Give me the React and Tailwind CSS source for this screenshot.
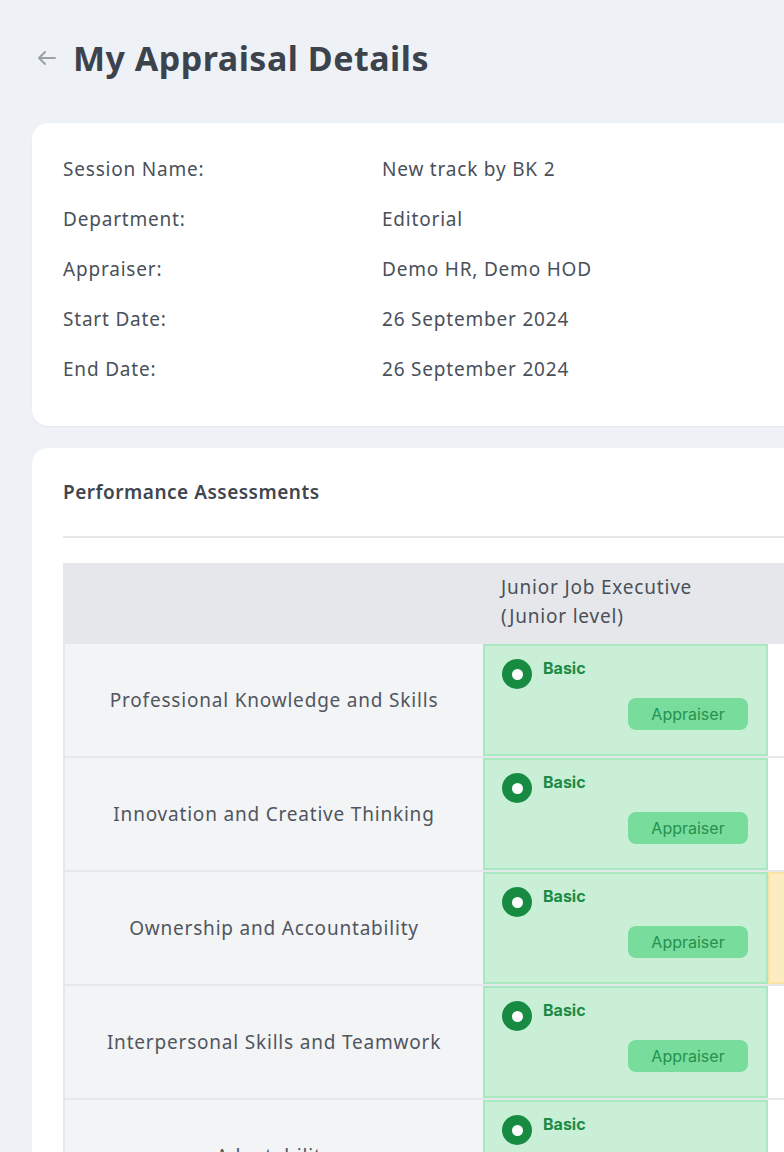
import React from 'react';

const info = [
  ['Session Name:', 'New track by BK 2'],
  ['Department:', 'Editorial'],
  ['Appraiser:', 'Demo HR, Demo HOD'],
  ['Start Date:', '26 September 2024'],
  ['End Date:', '26 September 2024'],
];

const rows = [
  { name: 'Professional Knowledge and Skills', next: 'none' },
  { name: 'Innovation and Creative Thinking', next: 'none' },
  { name: 'Ownership and Accountability', next: 'yellow' },
  { name: 'Interpersonal Skills and Teamwork', next: 'none' },
  { name: 'Adaptability', next: 'none' },
];

const RatingCell = () => (
  <div className="flex h-full flex-col border-2 border-[#a9e9c2] bg-[#c9f0d7] pb-[24px] pl-[17px] pr-[18px] pt-[11px]">
    <div className="flex items-start gap-[11px]">
      <span className="mt-[2px] flex h-[30px] w-[30px] items-center justify-center rounded-full bg-[#188b43]">
        <span className="h-[11px] w-[11px] rounded-full bg-white" />
      </span>
      <span className="font-['Inter',sans-serif] text-[16px] font-bold leading-[22px] text-[#1c8a45]">Basic</span>
    </div>
    <div className="mt-auto flex justify-end">
      <span className="flex h-[32px] w-[120px] items-center justify-center rounded-lg bg-[#78dc9c] font-['Inter',sans-serif] text-[16px] text-[#25924f]">
        Appraiser
      </span>
    </div>
  </div>
);

export default function App() {
  return (
    <div className="h-[1152px] overflow-hidden bg-[#eef2f7] font-['Noto_Sans','Open_Sans',sans-serif] text-[#3f4650]">
      <div className="flex items-center pl-[35px] pt-[36px]">
        <svg width="24" height="24" viewBox="0 0 24 24" fill="none" stroke="#9aa0a6" strokeWidth="2" strokeLinecap="round" strokeLinejoin="round">
          <path d="M20 12H4M10 6l-6 6 6 6" />
        </svg>
        <h1 className="ml-[14px] text-[34px] font-bold leading-[44px] tracking-[0.5px] text-[#3d434c]">My Appraisal Details</h1>
      </div>

      <div className="ml-8 mt-[43px] w-[900px] rounded-2xl bg-white pb-[32px] pl-[31px] pt-[21px] shadow-[0_1px_2px_rgba(0,0,0,0.05)]">
        {info.map(([k, v]) => (
          <div key={k} className="flex h-[50px] items-center text-[19px] tracking-[0.8px] text-[#4a5059]">
            <span className="w-[319px]">{k}</span>
            <span>{v}</span>
          </div>
        ))}
      </div>

      <div className="ml-8 mt-[22px] w-[900px] rounded-2xl bg-white pl-[31px] pt-[31px]">
        <h2 className="text-[19px] font-semibold leading-[26px] tracking-[0.5px] text-[#40464f]">Performance Assessments</h2>
        <div className="mt-[31px] h-[2px] bg-[#e5e7eb]" />
        <div className="mt-[25px]">
          <div className="grid h-[81px] grid-cols-[420px_285px_1fr] bg-[#e5e7eb]">
            <div />
            <div className="pl-[18px] pt-[10px] text-[19px] leading-[29px] tracking-[0.8px] text-[#4a5059]">
              Junior Job Executive
              <br />
              (Junior level)
            </div>
            <div />
          </div>
          {rows.map((r) => (
            <div key={r.name} className="grid h-[114px] grid-cols-[420px_285px_1fr] border-b-2 border-[#e5e7eb]">
              <div className="flex items-center justify-center border-l-2 border-[#e5e7eb] bg-[#f3f4f6] text-[19px] tracking-[0.8px] text-[#50565e]">
                {r.name}
              </div>
              <RatingCell />
              {r.next === 'yellow' ? (
                <div className="border-2 border-[#fbe3a3] bg-[#fdebc2]" />
              ) : (
                <div className="bg-white" />
              )}
            </div>
          ))}
        </div>
      </div>
    </div>
  );
}
